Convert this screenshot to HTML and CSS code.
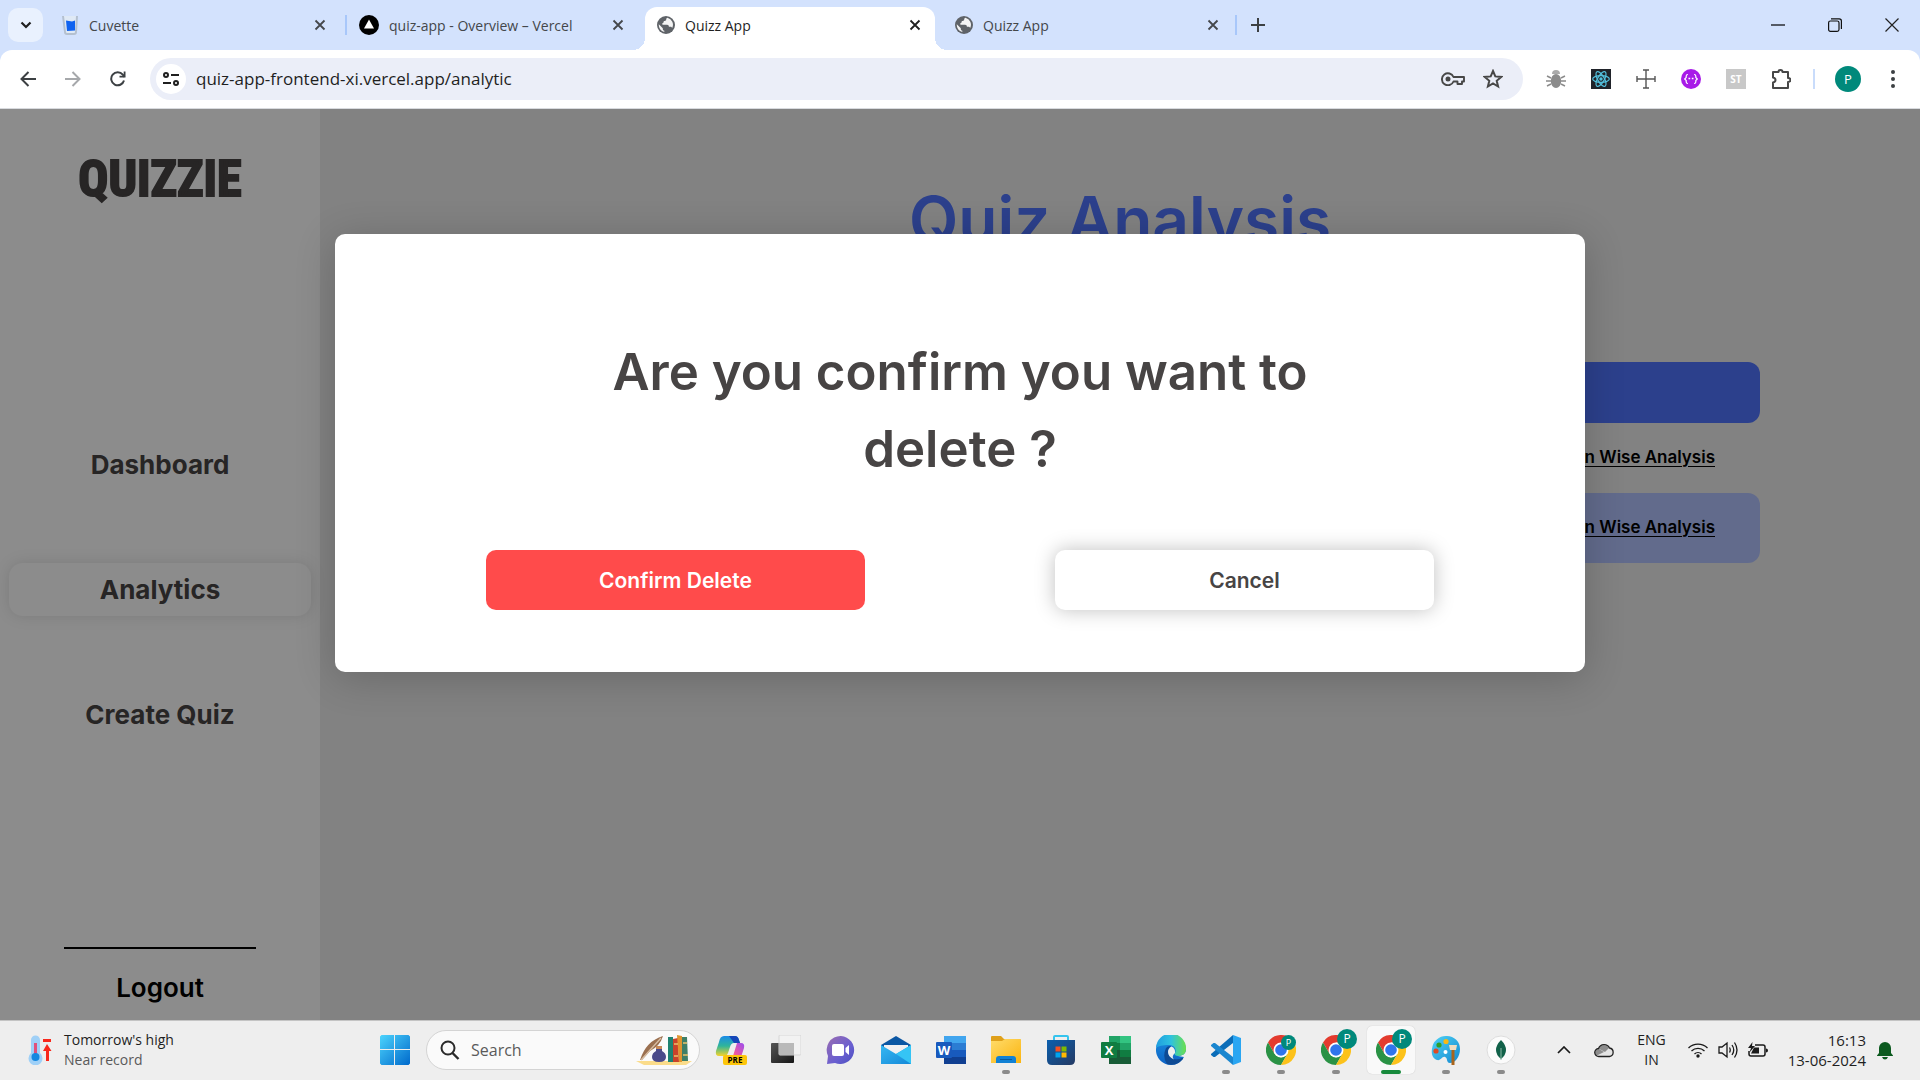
FILE: index.html
```html
<!DOCTYPE html>
<html lang="en">
<head>
<meta charset="utf-8">
<title>Quizz App</title>
<link rel="stylesheet" href="styles.css">
</head>
<body>
<svg class="defs" aria-hidden="true">
  <defs>
    <linearGradient id="gWin" x1="0" y1="0" x2="1" y2="1"><stop offset="0" stop-color="#4cd4fd"/><stop offset="1" stop-color="#0069cb"/></linearGradient>
    <linearGradient id="gEdge" x1="0" y1="0" x2="1" y2="0"><stop offset="0" stop-color="#1f9de0"/><stop offset=".5" stop-color="#2fc2df"/><stop offset="1" stop-color="#6be04c"/></linearGradient>
    <linearGradient id="gEdge2" x1="0" y1="0" x2="0" y2="1"><stop offset="0" stop-color="#1a8fe0"/><stop offset="1" stop-color="#0d62c4"/></linearGradient>
    <linearGradient id="gChat" x1="0" y1="0" x2="1" y2="1"><stop offset="0" stop-color="#9a6cb0"/><stop offset=".6" stop-color="#6a5fd0"/><stop offset="1" stop-color="#4a4fc0"/></linearGradient>
    <linearGradient id="gFold" x1="0" y1="0" x2="1" y2="1"><stop offset="0" stop-color="#ffdc6b"/><stop offset="1" stop-color="#fbb40f"/></linearGradient>
    <linearGradient id="gStore" x1="0" y1="0" x2="1" y2="1"><stop offset="0" stop-color="#0a5fae"/><stop offset="1" stop-color="#253a63"/></linearGradient>
    <linearGradient id="gMail" x1="0" y1="0" x2="1" y2="1"><stop offset="0" stop-color="#36b8f2"/><stop offset="1" stop-color="#1488d8"/></linearGradient>
    <linearGradient id="gDark" x1="0" y1="0" x2="1" y2="1"><stop offset="0" stop-color="#555"/><stop offset="1" stop-color="#161616"/></linearGradient>
    <linearGradient id="gCopA" x1="0" y1="0" x2="0" y2="1"><stop offset="0" stop-color="#1b8be8"/><stop offset=".5" stop-color="#2fb59a"/><stop offset="1" stop-color="#f5d32b"/></linearGradient>
    <linearGradient id="gCopB" x1="1" y1="0" x2="0" y2="1"><stop offset="0" stop-color="#9a4df0"/><stop offset=".6" stop-color="#ee5aa0"/><stop offset="1" stop-color="#ff9a5c"/></linearGradient>
    <linearGradient id="gPal" x1="0" y1="0" x2="1" y2="1"><stop offset="0" stop-color="#4fd3f5"/><stop offset="1" stop-color="#1488d0"/></linearGradient>
    <symbol id="close" viewBox="0 0 12 12"><path d="M1.5 1.5l9 9M10.5 1.5l-9 9" fill="none" stroke="currentColor" stroke-width="1.8"/></symbol>
    <symbol id="globe" viewBox="0 0 18 18"><circle cx="9" cy="9" r="9" fill="#5f6368"/><path d="M10.500 1.700c-1 .4-1.300 1-1.300 1.900 0 1-.6 1.300-1.600 1.300-.8 0-1 .5-1 1.200s-.5 1-1.200 1v1.700h4.700c1.200 0 1.800.9 1.800 1.900h1.600c.9 0 1.400.6 1.700 1.300A7.300 7.300 0 0 0 10.500 1.700zM1.800 8.300l4 4v.8c0 .9.700 1.600 1.500 1.600v1.400A7.300 7.300 0 0 1 1.800 8.300z" fill="#fff" opacity=".93"/></symbol>
    <symbol id="chrome" viewBox="0 0 30 30"><path d="M2 7.500A15 15 0 0 1 28 7.500H15L8.500 18.700z" fill="#e33b2e"/><path d="M2 7.500A15 15 0 0 0 15 30L21.500 18.700 15 22.500 8.500 18.700z" fill="#2a9245"/><path d="M28 7.500A15 15 0 0 1 15 30l6.500-11.300V7.500z" fill="#fcc21b"/><circle cx="15" cy="15" r="7.500" fill="#fff"/><circle cx="15" cy="15" r="5.800" fill="#2f75ec"/></symbol>
  </defs>
</svg>

<header class="browser">
  <div class="tabstrip">
    <button class="tab-search" aria-label="Search tabs"><svg width="12" height="8" viewBox="0 0 12 8"><path d="M1.500 1.500L6 6l4.500-4.500" fill="none" stroke="#1f1f1f" stroke-width="2.200"/></svg></button>
    <div class="tabs">
      <div class="tab first">
        <svg width="18" height="20" viewBox="0 0 18 20"><path d="M2 1l2 16q0 2 2 2h7q2 0 2-2l1-16" fill="#dfe9f5" stroke="#b4c0d0" stroke-width="2"/><path d="M5 5.500l6 1 3-1v10l-8 .5z" fill="#0f62f0"/></svg>
        <span class="tab-title">Cuvette</span>
        <button class="icon-btn" aria-label="Close tab"><svg width="12" height="12"><use href="#close"/></svg></button>
      </div>
      <div class="tab divided">
        <svg width="20" height="20" viewBox="0 0 20 20"><circle cx="10" cy="10" r="10"/><path d="M10 4.500l5 9H5z" fill="#fff"/></svg>
        <span class="tab-title">quiz-app - Overview – Vercel</span>
        <button class="icon-btn" aria-label="Close tab"><svg width="12" height="12"><use href="#close"/></svg></button>
      </div>
      <div class="tab active">
        <svg width="18" height="18"><use href="#globe"/></svg>
        <span class="tab-title">Quizz App</span>
        <button class="icon-btn" aria-label="Close tab"><svg width="12" height="12"><use href="#close"/></svg></button>
      </div>
      <div class="tab last">
        <svg width="18" height="18"><use href="#globe"/></svg>
        <span class="tab-title">Quizz App</span>
        <button class="icon-btn" aria-label="Close tab"><svg width="12" height="12"><use href="#close"/></svg></button>
      </div>
      <button class="new-tab" aria-label="New tab"><svg width="14" height="14" viewBox="0 0 14 14"><path d="M7 0v14M0 7h14" stroke="#3c4043" stroke-width="2"/></svg></button>
    </div>
    <div class="window-controls">
      <button class="icon-btn" aria-label="Minimize"><svg width="14" height="14" viewBox="0 0 14 14"><path d="M0 7h14" stroke="#000" stroke-width="1.200"/></svg></button>
      <button class="icon-btn" aria-label="Restore"><svg width="14" height="14" viewBox="0 0 14 14"><rect x=".6" y="3" width="10.400" height="10.400" rx="1.800" fill="none" stroke="#111" stroke-width="1.200"/><path d="M3 .8h8.200q2.200 0 2.200 2.200v8" fill="none" stroke="#111" stroke-width="1.200"/></svg></button>
      <button class="icon-btn" aria-label="Close window"><svg width="14" height="14" viewBox="0 0 14 14"><path d="M.5.5l13 13M13.500.5l-13 13" stroke="#222" stroke-width="1.200"/></svg></button>
    </div>
  </div>

  <div class="toolbar">
    <div class="nav-buttons">
      <button class="icon-btn" aria-label="Back"><svg width="16" height="16" viewBox="0 0 16 16"><path d="M16 8H2M8.500 1L1.500 8l7 7" fill="none" stroke="#3c4043" stroke-width="2"/></svg></button>
      <button class="icon-btn" aria-label="Forward"><svg width="16" height="16" viewBox="0 0 16 16"><path d="M0 8h14M7.500 1l7 7-7 7" fill="none" stroke="#a6a8ab" stroke-width="2"/></svg></button>
      <button class="icon-btn" aria-label="Reload"><svg width="16" height="16" viewBox="0 0 16 16"><path d="M14 9.500A6.500 6.500 0 1 1 12.800 3.700L14.500 6" fill="none" stroke="#3c4043" stroke-width="2"/><path d="M15.500.5v6h-6v-1.700h4.200V.5z" fill="#3c4043"/></svg></button>
    </div>
    <div class="omnibox">
      <button class="site-info" aria-label="View site information"><svg width="16" height="14" viewBox="0 0 16 14"><g fill="none" stroke="#1f1f1f" stroke-width="2"><circle cx="3" cy="3" r="2"/><path d="M8 3h8M0 11h8"/><circle cx="13" cy="11" r="2"/></g></svg></button>
      <input class="url" type="text" aria-label="Address" value="quiz-app-frontend-xi.vercel.app/analytic">
      <button class="icon-btn" aria-label="Manage passwords"><svg width="24" height="14" viewBox="0 0 24 14"><path d="M12.500 5H23v4.500h-2V12h-4.500V9.500h-4A6 6 0 1 1 12.500 5z" fill="none" stroke="#474747" stroke-width="1.900" stroke-linejoin="round"/><circle cx="7" cy="7" r="2.500" fill="#474747"/></svg></button>
      <button class="icon-btn" aria-label="Bookmark"><svg width="20" height="20" viewBox="0 0 20 20"><path d="M10 2l2.300 5.400 5.900.5-4.500 3.900 1.400 5.700-5.100-3-5.100 3 1.400-5.700-4.500-3.900 5.900-.5z" fill="none" stroke="#474747" stroke-width="2"/></svg></button>
    </div>
    <div class="extensions">
      <button class="icon-btn" aria-label="Debugger"><svg width="20" height="20" viewBox="0 0 20 20"><path d="M6 5a4 4 0 0 1 8 0z" fill="#aaa"/><ellipse cx="10" cy="12" rx="5.200" ry="7" fill="#8b8b8b"/><path d="M1 7l4 2M0 12h5M1 17l4-2M19 7l-4 2M20 12h-5M19 17l-4-2" stroke="#8b8b8b" stroke-width="1.400"/></svg></button>
      <button class="icon-btn" aria-label="React tools"><svg width="20" height="20" viewBox="0 0 20 20"><rect width="20" height="20" fill="#20232a"/><g fill="none" stroke="#53c1de" stroke-width="1.200"><ellipse cx="10" cy="10" rx="8.300" ry="3.300"/><ellipse cx="10" cy="10" rx="8.300" ry="3.300" transform="rotate(60 10 10)"/><ellipse cx="10" cy="10" rx="8.300" ry="3.300" transform="rotate(120 10 10)"/></g><circle cx="10" cy="10" r="1.700" fill="#53c1de"/></svg></button>
      <button class="icon-btn" aria-label="Dimensions"><svg width="20" height="20" viewBox="0 0 20 20"><path d="M10 1v18M1 10h18M7 1h6M7 19h6M1 7v6M19 7v6" stroke="#555" stroke-width="1.400"/></svg></button>
      <button class="icon-btn" aria-label="Snippets"><svg width="20" height="20" viewBox="0 0 20 20"><circle cx="10" cy="10" r="10" fill="#a81be8"/><path d="M7 5.500q-1.800 0-1.800 1.500v1.500L3.700 10l1.500 1.500V13q0 1.500 1.800 1.500M13 5.500q1.800 0 1.800 1.500v1.500l1.500 1.500-1.500 1.500V13q0 1.500-1.800 1.500" fill="none" stroke="#fff" stroke-width="1.200"/><path d="M7.500 9.500h1.700M10.800 9.500h1.700" stroke="#fff" stroke-width="1.600"/></svg></button>
      <button class="icon-btn st" aria-label="ST">ST</button>
      <button class="icon-btn" aria-label="Extensions"><svg width="20" height="20" viewBox="1 1 20 20"><path d="M3 4h5.500q0-2 2-2t2 2H18v6q2.500 0 2.500 2T18 14v6H3v-5.500q2.500-.5 2.500-2.500T3 9.500z" fill="none" stroke="#474747" stroke-width="2" stroke-linejoin="round"/></svg></button>
      <span class="bar-divider"></span>
      <button class="avatar" aria-label="Profile">P</button>
      <button class="icon-btn" aria-label="Menu"><svg width="4" height="18" viewBox="0 0 4 18"><g fill="#3c4043"><circle cx="2" cy="2" r="2"/><circle cx="2" cy="9" r="2"/><circle cx="2" cy="16" r="2"/></g></svg></button>
    </div>
  </div>
</header>

<div class="app">
  <aside class="sidebar">
    <div class="logo">QUIZZIE</div>
    <nav class="menu">
      <a href="#dashboard">Dashboard</a>
      <a href="#analytics" class="current">Analytics</a>
      <a href="#create">Create Quiz</a>
    </nav>
    <div class="logout"><button>Logout</button></div>
  </aside>
  <main class="content">
    <h1>Quiz Analysis</h1>
    <table class="quizzes">
      <thead><tr><th></th></tr></thead>
      <tbody>
        <tr><td><a href="#q1">Question Wise Analysis</a></td></tr>
        <tr><td><a href="#q2">Question Wise Analysis</a></td></tr>
      </tbody>
    </table>
  </main>
  <div class="overlay">
    <div class="modal" role="dialog" aria-labelledby="ask">
      <h2 id="ask">Are you confirm you want to delete ?</h2>
      <div class="actions">
        <button class="confirm">Confirm Delete</button>
        <button class="cancel">Cancel</button>
      </div>
    </div>
  </div>
</div>

<footer class="taskbar">
  <div class="weather">
    <svg width="24" height="30" viewBox="0 0 24 30"><path d="M3 5a4.500 4.500 0 0 1 9 0v13a7 7 0 1 1-9 0z" fill="#9fd0f7"/><path d="M6 8h3v12H6z" fill="#e0507a"/><circle cx="7.500" cy="22" r="4" fill="#1487e0"/><path d="M15 4h8v3h-8zM19 9l4.500 7H21v10h-3V16h-3z" fill="#f8281c"/></svg>
    <div class="two-lines"><span>Tomorrow's high</span><span class="muted">Near record</span></div>
  </div>
  <div class="dock">
    <button class="app-btn" aria-label="Start"><svg width="30" height="30" viewBox="0 0 30 30"><path d="M1.500 0H14v14H0V1.500zM15 0h13.500L30 1.500V14H15zM0 15h14v15H1.500L0 28.500zM15 15h15v13.500L28.500 30H15z" fill="url(#gWin)"/></svg></button>
    <label class="search">
      <svg width="20" height="20" viewBox="0 0 20 20"><circle cx="8" cy="8" r="6.500" fill="none" stroke="#2a2a2a" stroke-width="2"/><path d="M12.500 13l6 6" stroke="#2a2a2a" stroke-width="2.400"/></svg>
      <input type="text" placeholder="Search" aria-label="Search">
      <svg width="56" height="30" viewBox="0 0 56 30"><path d="M0 26h56l-6 4H8z" fill="#fbdc8a"/><path d="M4 25Q10 6 27 1q-3 10-13 15l-8 9z" fill="#9b7050"/><path d="M5 25L25 3" stroke="#d8bfa4" stroke-width="1.300"/><path d="M20 11h6v5q4 2 4 6 0 5-7 5t-7-5q0-4 4-6z" fill="#4a4a8a"/><path d="M20 11h6v3h-6z" fill="#c98a58"/><path d="M32 2h5v25h-5z" fill="#1e8271"/><path d="M37 4l5-1 1 24h-6z" fill="#c8432b"/><path d="M41 0l5 1v26h-3z" fill="#e0942f"/><path d="M46 2h5l1 24h-6z" fill="#3f7f66"/><path d="M38 9h4M38 21h4M47 8h4M47 20h5" stroke="#e9c26b" stroke-width="1.500"/></svg>
    </label>
    <button class="app-btn" aria-label="Copilot"><svg width="32" height="30" viewBox="0 0 32 30"><path d="M9 1h11q3 0 4 4l1 3h-6q-3 0-4 4l-2 6q-1 3-4 3H4q-4 0-3-5l3-9q1-6 5-6z" fill="url(#gCopA)"/><path d="M14 1h6q3 0 4 4l1 3h-6z" fill="#1546b8"/><path d="M22 8h4q4 0 3 5l-3 9q-1 3-5 3h-7q3 0 4-4z" fill="url(#gCopB)"/><rect x="8" y="20" width="24" height="10" rx="2" fill="#fdc60a"/><text x="20" y="28" class="pre">PRE</text></svg></button>
    <button class="app-btn" aria-label="Task view"><svg width="30" height="30" viewBox="0 0 30 30"><rect y="8" width="23" height="20" rx="1" fill="url(#gDark)"/><rect x="8" y="0" width="22" height="20" rx="1" fill="#f2f2f2" stroke="#d6d6d6"/><path d="M8 8h15v12H8z" fill="#b9b9b9"/></svg></button>
    <button class="app-btn" aria-label="Chat"><svg width="30" height="30" viewBox="0 0 30 30"><path d="M15 1a14 14 0 1 1-6 27l-8 1 1-8A14 14 0 0 1 15 1z" fill="url(#gChat)"/><rect x="6" y="9" width="12" height="12" rx="2" fill="#fff"/><path d="M19.500 13l3.500-3v10l-3.500-3z" fill="#fff"/></svg></button>
    <button class="app-btn" aria-label="Mail"><svg width="30" height="30" viewBox="0 0 30 30"><path d="M0 10L15 1l15 9v6H0z" fill="#0b57a4"/><path d="M3 10h24v8H3z" fill="#f1f0f2"/><path d="M0 10l15 9L30 10v19H0z" fill="url(#gMail)"/><path d="M30 10L15 19 30 29z" fill="#35c4f5"/></svg></button>
    <button class="app-btn" aria-label="Word"><svg width="30" height="30" viewBox="0 0 30 30"><path d="M8 1h22v7H8z" fill="#41a5ee"/><path d="M8 8h22v7H8z" fill="#2b7cd3"/><path d="M8 15h22v7H8z" fill="#185abd"/><path d="M8 22h22v7H8z" fill="#103f91"/><rect y="7" width="16" height="16" rx="1" fill="#185abd"/><text x="8" y="20" class="office">W</text></svg></button>
    <button class="app-btn running" aria-label="File Explorer"><svg width="30" height="30" viewBox="0 0 30 30"><path d="M0 2q0-1 1-1h9l3 3h15q2 0 2 2v6H0z" fill="#dfa01a"/><path d="M0 6h11l3-2h15q1 0 1 1v23H0z" fill="url(#gFold)"/><path d="M5 28v-4q0-3 3-3h14q3 0 3 3v4z" fill="#1181d4"/><path d="M9 24.500h12" stroke="#0a5a9c"/></svg></button>
    <button class="app-btn" aria-label="Store"><svg width="30" height="30" viewBox="0 0 30 30"><path d="M8 6V2q0-1 1-1h12q1 0 1 1v4" fill="none" stroke="#35c4ee" stroke-width="2"/><path d="M1 5h28v20q0 5-5 5H6q-5 0-5-5z" fill="url(#gStore)"/><path d="M9.500 11.500h5v5h-5z" fill="#f25022"/><path d="M15.500 11.500h5v5h-5z" fill="#7fba00"/><path d="M9.500 17.500h5v5h-5z" fill="#00a4ef"/><path d="M15.500 17.500h5v5h-5z" fill="#ffb900"/></svg></button>
    <button class="app-btn" aria-label="Excel"><svg width="30" height="30" viewBox="0 0 30 30"><path d="M8 1h22v28H8z" fill="#21a366"/><path d="M19 1h11v7H19z" fill="#33c481"/><path d="M8 8h11v7H8zM19 15h11v7H19z" fill="#107c41"/><path d="M8 15h11v7H8zM8 22h22v7H8z" fill="#185c37"/><rect y="7" width="16" height="16" rx="1" fill="#107c41"/><text x="8" y="20" class="office">X</text></svg></button>
    <button class="app-btn" aria-label="Edge"><svg width="30" height="30" viewBox="0 0 30 30"><path d="M0 14A15 15 0 0 1 15 0a15 15 0 0 1 15 14c0 5-4 7-8 7l6 1a15 15 0 0 1-13 8A15 15 0 0 1 0 14z" fill="url(#gEdge2)"/><path d="M0 13A15 15 0 0 1 30 14c0 5-4 7-8 7-3 0-4-1.500-3-3 2-4-1-8-6-8-6 0-11 1-13 3z" fill="url(#gEdge)"/><path d="M10 13q-4 9 1 16 9 3 16-5 .5-1.500-1-1-4 2-8 1-6-2-6-7.500 0-3 3-5.500-3-.5-5 2z" fill="#0e4a94"/><path d="M19 18q.5-5-3.500-6.500-3.500 2-3.500 5.500 0 5 6 7.500-3-3 1-6.500z" fill="#eee"/></svg></button>
    <button class="app-btn running" aria-label="Visual Studio Code"><svg width="30" height="30" viewBox="0 0 30 30"><path d="M22 0v8L4 22l-1.500 0L0 20v-1z" fill="#0b6db8"/><path d="M22 30v-8L4 8H2.500L0 10v1z" fill="#1a86cf"/><path d="M22 0l8 3v24l-8 3z" fill="#2aa6f2"/></svg></button>
    <button class="app-btn running" aria-label="Chrome"><svg width="30" height="30"><use href="#chrome"/></svg><span class="badge small">P</span></button>
    <button class="app-btn running" aria-label="Chrome, profile P"><svg width="30" height="30"><use href="#chrome"/></svg><span class="badge">P</span></button>
    <button class="app-btn running focused" aria-label="Chrome, current window"><svg width="30" height="30"><use href="#chrome"/></svg><span class="badge">P</span></button>
    <button class="app-btn running" aria-label="Paint"><svg width="30" height="30" viewBox="0 0 30 30"><path d="M16 1a13 13 0 0 1 13 13c0 8-5 14-10 14-4 0-2-5-5-6s-4 4-8 3c-4-1-6-6-5-11A14 14 0 0 1 16 1z" fill="url(#gPal)"/><circle cx="8" cy="10" r="2.600" fill="#2f9e28"/><circle cx="15" cy="6.500" r="2.600" fill="#f8b814"/><circle cx="5" cy="16" r="2.600" fill="#dd4a23"/><circle cx="14.500" cy="17" r="2" fill="#fff"/><path d="M18 10h8l-1 5h-6z" fill="#f1dcc0"/><path d="M20.500 15h3v15h-3z" fill="#a8641c"/></svg></button>
    <button class="app-btn running" aria-label="MongoDB Compass"><svg width="30" height="30" viewBox="0 0 30 30"><circle cx="15" cy="15" r="14" fill="#fbfbfb" stroke="#ddd"/><path d="M15 5q5 5 5 10t-5 9q-5-4-5-9t5-10z" fill="#116149"/><path d="M15 13v12" stroke="#8dbba8"/></svg></button>
  </div>
  <div class="tray">
    <button class="icon-btn chevron" aria-label="Show hidden icons"><svg width="14" height="8" viewBox="0 0 14 8"><path d="M1 7l6-6 6 6" fill="none" stroke="#1a1a1a" stroke-width="1.700"/></svg></button>
    <button class="icon-btn cloud" aria-label="OneDrive"><svg width="20" height="16" viewBox="0 0 20 16"><path d="M5 14.500a4 4 0 0 1-.5-8A6 6 0 0 1 15.500 6a4.300 4.300 0 0 1 0 8.500z" fill="#e4e4e4"/><path d="M4.500 6.500A6 6 0 0 1 15 6l-4 4zM1 11q0-4 4-4l5 3-8 4z" fill="#8c8c8c"/><path d="M5 14.500a4 4 0 0 1-.5-8A6 6 0 0 1 15.500 6a4.300 4.300 0 0 1 0 8.500z" fill="none" stroke="#222" stroke-width="1.300"/></svg></button>
    <div class="two-lines centered"><span>ENG</span><span>IN</span></div>
    <div class="status">
      <svg width="20" height="16" viewBox="0 0 20 16"><g fill="none" stroke="#1a1a1a" stroke-width="1.300"><path d="M.5 6a13.500 13.500 0 0 1 19 0M3.500 9a9.300 9.300 0 0 1 13 0M6.500 12a5 5 0 0 1 7 0"/></g><circle cx="10" cy="14" r="1.700" fill="#1a1a1a"/></svg>
      <svg width="20" height="18" viewBox="0 0 20 18"><path d="M1 6h3l5-4v14l-5-4H1zM11.500 6.500q1.500 2.500 0 5M14 4q3.500 5 0 10M16.500 1.500q5 7.500 0 15" fill="none" stroke="#1a1a1a" stroke-width="1.300"/></svg>
      <svg width="20" height="16" viewBox="0 0 20 16"><path d="M7 3h8q2 0 2 2v7q0 2-2 2H3q-2 0-2-2V9" fill="none" stroke="#1a1a1a" stroke-width="1.500"/><path d="M6 5.500h5v6H3zM18 6.500q2 0 2 2t-2 2z" fill="#1a1a1a"/><path d="M4.500 0L0 6h3L1.500 10.500 7 4H4z" fill="#1a1a1a"/></svg>
    </div>
    <div class="two-lines right"><span>16:13</span><span>13-06-2024</span></div>
    <svg width="16" height="20" viewBox="0 0 16 20"><path d="M2 8a6 6 0 0 1 12 0v5l2 2.500v.5H0v-.5L2 13zM5 17h6q-1 2.500-3 2.500T5 17z" fill="#0c5a1f"/></svg>
  </div>
</footer>
</body>
</html>
```

FILE: styles.css
```css
* { box-sizing: border-box; }

body {
  margin: 0;
  min-height: 100vh;
  display: flex;
  flex-direction: column;
  font-family: "Open Sans", "Noto Sans", sans-serif;
  font-size: 14px;
  color: #1f1f1f;
}

button, input { font: inherit; color: inherit; border: 0; padding: 0; background: none; }
button { cursor: pointer; }
input { outline: 0; min-width: 0; }
svg { display: block; flex: none; }
.defs { position: absolute; width: 0; height: 0; }
.icon-btn { display: flex; align-items: center; justify-content: center; flex: none; }

/* Browser frame */
.browser { background: #d3e2fd; }
.tabstrip { display: flex; align-items: flex-end; height: 50px; padding-left: 8px; }
.tab-search {
  display: flex; align-items: center; justify-content: center;
  width: 35px; height: 34px; margin-bottom: 8px;
  border-radius: 10px; background: #e9f1fe;
}
.tabs { display: flex; flex: 1; align-items: flex-end; padding-left: 6px; }
.tab {
  position: relative;
  display: flex; align-items: center; gap: 10px;
  flex: 0 1 298px; height: 43px; padding: 0 21px 7px 12px;
  color: #44474b;
}
.tab.last { flex-basis: 294px; padding-right: 18px; }
.tab.active { padding-right: 14px; }
.tab .icon-btn { width: 12px; }
.tab-title { flex: 1; white-space: nowrap; overflow: hidden; }
.tab.divided::before, .new-tab::before {
  content: ""; position: absolute; left: -2px; top: 8px;
  width: 2px; height: 20px; background: #a8c7fa;
}
.tab.active {
  flex-basis: 290px; margin-right: 8px;
  background: #fff; color: #1f1f1f; border-radius: 12px 12px 0 0;
}
.tab.active::before, .tab.active::after {
  content: ""; position: absolute; bottom: 0; width: 12px; height: 12px;
}
.tab.active::before { left: -12px; background: radial-gradient(circle at 0 0, transparent 12px, #fff 12px); }
.tab.active::after { right: -12px; background: radial-gradient(circle at 100% 0, transparent 12px, #fff 12px); }
.new-tab {
  position: relative;
  display: flex; align-items: center; justify-content: center;
  width: 42px; height: 36px; margin-bottom: 7px;
}
.window-controls { display: flex; align-self: stretch; }
.window-controls .icon-btn { width: 57px; }

.toolbar {
  display: flex; align-items: center;
  height: 59px; padding: 0 25px 1px 20px;
  background: #fff; border-radius: 12px 12px 0 0;
  border-bottom: 1px solid #d8dade;
}
.nav-buttons { display: flex; gap: 29px; margin-right: 24px; }
.omnibox {
  display: flex; align-items: center; gap: 18px; flex: 1;
  height: 42px; padding: 0 20px 0 6px;
  border-radius: 21px; background: #ebeef8;
}
.site-info {
  display: flex; align-items: center; justify-content: center;
  width: 30px; height: 30px; margin-right: -8px;
  border-radius: 50%; background: #fff;
}
.url { flex: 1; font-size: 17px; }
.extensions { display: flex; align-items: center; gap: 25px; padding-left: 23px; }
.st {
  width: 20px; height: 20px; background: #c8c8c8; color: #fff;
  font-size: 10px; font-weight: 700;
}
.bar-divider { width: 2px; height: 20px; margin: 0 -5px 0 -3px; background: #c9dcfb; }
.avatar {
  width: 26px; height: 26px; margin-right: 5px; border-radius: 50%;
  background: #00897b; color: #fff; font-size: 13px;
}

/* Quiz app */
.app {
  position: relative; flex: 1;
  display: flex;
  font-family: Inter, "Open Sans", sans-serif;
  background: #ededed; color: #474444;
}
.sidebar {
  display: flex; flex-direction: column; align-items: center;
  flex: 0 0 320px; background: #fff;
}
.logo {
  padding-top: 40px;
  font-family: "Liberation Sans Narrow", "Roboto Condensed", sans-serif;
  font-size: 50px; font-weight: 700; line-height: 60px;
  -webkit-text-stroke: 2px #474444;
}
.menu {
  display: flex; flex-direction: column; gap: 72px;
  align-self: stretch; margin: 229px 9px auto;
}
.menu a {
  padding: 8px; border-radius: 14px;
  font-size: 26px; font-weight: 700; line-height: 37px;
  text-align: center; text-decoration: none; color: inherit;
}
.menu .current { box-shadow: 0 0 16px rgba(0, 0, 0, .12); }
.logout {
  width: 192px; border-top: 2px solid #000; padding: 18px 0 11px;
  text-align: center; color: #000;
}
.logout button { font-size: 26px; font-weight: 600; line-height: 42px; }

.content { flex: 1; padding: 63px 160px 0; }
.content h1 {
  margin: 0 0 94px; text-align: center;
  font-size: 64px; font-weight: 600; line-height: 96px; color: #5076ff;
}
.quizzes { width: 100%; border-collapse: separate; border-spacing: 0; }
.quizzes th { height: 61px; padding: 0; background: #5076ff; }
.quizzes th, .quizzes td { border-radius: 12px; }
.quizzes td { height: 70px; padding: 0 45px 2px; text-align: right; font-size: 17px; font-weight: 600; }
.quizzes td a { color: #000; text-underline-offset: 3px; }
.quizzes tbody tr:nth-child(even) td { background: #b3c4ff; }

.overlay {
  position: absolute; inset: 0;
  display: flex; justify-content: center; align-items: flex-start;
  padding-top: 125px; background: rgba(0, 0, 0, .45);
}
.modal {
  width: 1250px; max-width: 92%; padding: 99px 151px 62px;
  border-radius: 10px; background: #fff;
  box-shadow: 0 6px 40px rgba(0, 0, 0, .2);
}
.modal h2 {
  max-width: 760px; margin: 0 auto 63px; text-align: center;
  font-size: 51px; font-weight: 600; line-height: 77px;
}
.actions { display: grid; grid-template-columns: 1fr 1fr; gap: 190px; }
.actions button { height: 60px; border-radius: 10px; font-size: 21px; font-weight: 600; }
.actions .confirm { background: #ff4b4b; color: #fff; }
.actions .cancel { background: #fff; box-shadow: 0 0 20px rgba(0, 0, 0, .25); }

/* Taskbar */
.taskbar {
  display: flex; align-items: center;
  height: 60px; padding-bottom: 1px; border-top: 1px solid #c4c4c4; background: #eee;
}
.weather { display: flex; align-items: center; gap: 12px; flex: 0 0 371px; padding-left: 28px; }
.two-lines { display: flex; flex-direction: column; line-height: 20px; white-space: nowrap; }
.centered { align-items: center; }
.right { align-items: flex-end; font-size: 15px; }
.muted { color: #5a5a5a; }
.dock { display: flex; align-items: center; gap: 7px; }
.app-btn {
  position: relative;
  display: flex; align-items: center; justify-content: center;
  width: 48px; height: 48px; border-radius: 5px;
}
.running::after {
  content: ""; position: absolute; bottom: 0; left: 20px;
  width: 8px; height: 4px; border-radius: 2px; background: #8a8a8a;
}
.focused { background: #f9f9f9; box-shadow: 0 0 1px #bbb; }
.focused::after { left: 14px; width: 20px; background: #178a3c; }
.badge {
  position: absolute; left: 25px; top: 3px;
  width: 20px; height: 20px; border-radius: 50%;
  background: #00897b; color: #fff; font-size: 12px; line-height: 20px;
}
.badge.small { left: 24px; top: 9px; width: 15px; height: 15px; font-size: 9px; line-height: 15px; }
.pre { font: 700 8px "Open Sans", sans-serif; text-anchor: middle; }
.office { font: 700 13px "Open Sans", sans-serif; text-anchor: middle; fill: #fff; }
.search {
  display: flex; align-items: center; gap: 11px;
  width: 274px; height: 40px; padding: 0 7px 0 13px;
  border: 1px solid #d4d4d4; border-radius: 20px; background: #fafafa;
}
.search input { flex: 1; font-size: 16px; }
.search input::placeholder { color: #5a5a5a; opacity: 1; }
.tray { display: flex; align-items: center; margin-left: auto; padding-right: 27px; }
.cloud { margin: 0 23px; }
.status { display: flex; align-items: center; gap: 10px; margin: 0 20px 0 22px; }
.tray .right { margin-right: 11px; }
```
